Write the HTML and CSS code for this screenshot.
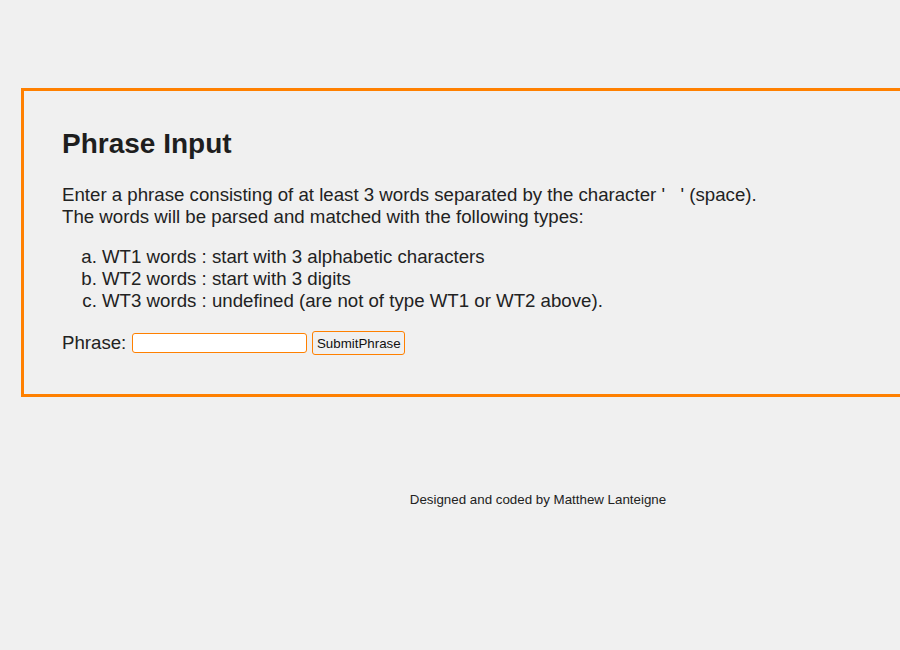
FILE: index.html
```html
<!DOCTYPE html>
<html>
<head>
<meta charset="utf-8">
<title>Phrase Input</title>
<link rel="stylesheet" href="styles.css">
</head>
<body>
<div class="page">
  <div class="panel">
    <h1 class="title">Phrase Input</h1>
    <p class="intro">Enter a phrase consisting of at least 3 words separated by the character '&nbsp;&nbsp;&nbsp;' (space).<br>The words will be parsed and matched with the following types:</p>
    <ol class="types">
      <li>WT1 words : start with 3 alphabetic characters</li>
      <li>WT2 words : start with 3 digits</li>
      <li>WT3 words : undefined (are not of type WT1 or WT2 above).</li>
    </ol>
    <form class="phrase-form">
      <label class="label" for="phrase">Phrase:</label>
      <input class="field" id="phrase" type="text">
      <button class="submit" type="button">SubmitPhrase</button>
    </form>
  </div>
  <p class="footer">Designed and coded by Matthew Lanteigne</p>
</div>
</body>
</html>
```

FILE: styles.css
```css
html, body {
  margin: 0;
  padding: 0;
  background: #f0f0f0;
  overflow: hidden;
}
body {
  font-family: "Liberation Sans", Arial, sans-serif;
  color: #222;
}
.page {
  width: 1076px;
  padding-top: 88px;
}
.panel {
  margin: 0 21px;
  border: 3px solid #ff8000;
  padding: 37px 38px 39px;
}
.title {
  font-size: 28px;
  font-weight: bold;
  margin: 0 0 24px;
  color: #1e1e1e;
}
.intro {
  font-size: 18.67px;
  line-height: 22px;
  margin: 0 0 18px;
}
.types {
  list-style: lower-alpha;
  font-size: 18.67px;
  line-height: 22px;
  margin: 0 0 19px;
  padding-left: 40px;
}
.phrase-form {
  display: flex;
  align-items: center;
  font-size: 18.67px;
}
.label {
  margin-right: 6px;
}
.field {
  width: 171px;
  height: 16px;
  border: 1px solid #ff8000;
  border-radius: 3px;
  background: #fff;
  padding: 1px 1px;
  margin: 0 5px 0 0;
}
.submit {
  font-family: "Liberation Sans", Arial, sans-serif;
  font-size: 13.33px;
  color: #111;
  background: #f0f0f0;
  border: 1px solid #ff8000;
  border-radius: 3px;
  height: 24px;
  width: 93px;
  padding: 0;
}
.footer {
  text-align: center;
  font-size: 13.33px;
  margin: 95px 0 0;
  color: #222;
}
```
